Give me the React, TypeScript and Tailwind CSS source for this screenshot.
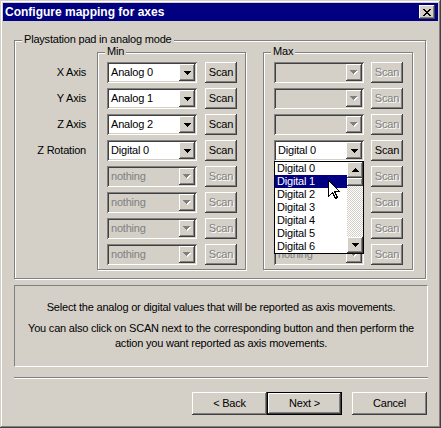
import clsx from 'clsx';

// classic 3D edges
const RAISED =
  'bg-[#d4d0c8] shadow-[inset_-1px_-1px_#404040,inset_1px_1px_#ffffff,inset_-2px_-2px_#808080,inset_2px_2px_#d4d0c8]';
const SUNKEN =
  'shadow-[inset_1px_1px_#808080,inset_-1px_-1px_#ffffff,inset_2px_2px_#404040,inset_-2px_-2px_#d4d0c8]';
const ETCHED = 'border border-[#808080] shadow-[inset_1px_1px_#ffffff,1px_1px_#ffffff]';

const MIN_ROWS = [
  { value: 'Analog 0' },
  { value: 'Analog 1' },
  { value: 'Analog 2' },
  { value: 'Digital 0' },
  { value: 'nothing', disabled: true },
  { value: 'nothing', disabled: true },
  { value: 'nothing', disabled: true },
  { value: 'nothing', disabled: true },
];

// rows 5-7 sit under the open list, so only the last one shows its text
const MAX_ROWS = [
  { value: '', disabled: true },
  { value: '', disabled: true },
  { value: '', disabled: true },
  { value: 'Digital 0', open: true },
  { value: '', disabled: true },
  { value: '', disabled: true },
  { value: '', disabled: true },
  { value: 'nothing', disabled: true },
];

const LIST = ['Digital 0', 'Digital 1', 'Digital 2', 'Digital 3', 'Digital 4', 'Digital 5', 'Digital 6'];

function Triangle({ up, color = '#000' }: { up?: boolean; color?: string }) {
  const rows = up ? [1, 3, 5, 7] : [7, 5, 3, 1];
  return (
    <svg width="7" height="4" viewBox="0 0 7 4" shapeRendering="crispEdges" className="block">
      {rows.map((w, i) => (
        <rect key={i} x={(7 - w) / 2} y={i} width={w} height={1} fill={color} />
      ))}
    </svg>
  );
}

function DisabledTriangle() {
  return (
    <span className="relative block h-[5px] w-[8px]">
      <span className="absolute left-[1px] top-[1px]">
        <Triangle color="#ffffff" />
      </span>
      <span className="absolute left-0 top-0">
        <Triangle color="#808080" />
      </span>
    </span>
  );
}

function Combo({ value, disabled }: { value: string; disabled?: boolean }) {
  return (
    <div
      className={clsx(
        'flex h-[21px] w-[90px] items-center p-[2px]',
        SUNKEN,
        disabled ? 'bg-[#d4d0c8]' : 'bg-white',
      )}
    >
      <span className={clsx('flex-1 truncate pl-[2px] leading-[17px]', disabled ? 'text-[#808080]' : 'text-black')}>
        {value}
      </span>
      <span className={clsx('flex h-[17px] w-[16px] items-center justify-center', RAISED)}>
        {disabled ? <DisabledTriangle /> : <Triangle />}
      </span>
    </div>
  );
}

function ScanButton({ disabled }: { disabled?: boolean }) {
  return (
    <button
      className={clsx(
        'flex h-[21px] w-[32px] items-center justify-center leading-none',
        RAISED,
        disabled ? 'text-[#808080] [text-shadow:1px_1px_0_#ffffff]' : 'text-black',
      )}
    >
      Scan
    </button>
  );
}

function GroupBox({ label, className, children }: { label: string; className?: string; children: React.ReactNode }) {
  return (
    <div className={clsx('relative', ETCHED, className)}>
      <span className="absolute -top-[8px] left-[7px] bg-[#d4d0c8] px-[2px] leading-[13px]">{label}</span>
      {children}
    </div>
  );
}

function DropList() {
  return (
    <div className="absolute left-0 top-[21px] z-10 flex h-[93px] w-[90px] border border-black bg-white">
      <div className="flex-1">
        {LIST.map((item) => (
          <div
            key={item}
            className={clsx(
              'h-[13px] pl-[2px] leading-[13px]',
              item === 'Digital 1' ? 'bg-[#000080] text-white' : 'text-black',
            )}
          >
            {item}
          </div>
        ))}
      </div>
      <div className="flex w-[16px] flex-col">
        <span className={clsx('flex h-[16px] items-center justify-center', RAISED)}>
          <Triangle up />
        </span>
        <span className={clsx('h-[8px]', RAISED)} />
        <span className="flex-1 [background-image:repeating-conic-gradient(#d4d0c8_0%_25%,#ffffff_0%_50%)] [background-size:2px_2px]" />
        <span className={clsx('flex h-[16px] items-center justify-center', RAISED)}>
          <Triangle />
        </span>
      </div>
      {/* mouse pointer */}
      <svg
        width="12"
        height="20"
        viewBox="0 0 12 20"
        shapeRendering="crispEdges"
        className="absolute left-[53px] top-[18px]"
      >
        <path d="M0.5 0.5 L0.5 16.5 L4.5 12.5 L7.5 18.5 L9.5 17.5 L6.5 11.5 L11.5 11.5 Z" fill="#fff" stroke="#000" />
      </svg>
    </div>
  );
}

function CloseGlyph() {
  const rows = ['XX....XX', '.XX..XX.', '..XXXX..', '...XX...', '..XXXX..', '.XX..XX.', 'XX....XX'];
  return (
    <svg width="8" height="7" viewBox="0 0 8 7" shapeRendering="crispEdges" className="block">
      {rows.flatMap((r, y) =>
        r.split('').map((c, x) => (c === 'X' ? <rect key={`${x}-${y}`} x={x} y={y} width={1} height={1} fill="#000" /> : null)),
      )}
    </svg>
  );
}

export default function App() {
  return (
    <div className="flex h-[428px] w-[441px] flex-col bg-[#d4d0c8] p-[3px] font-['Liberation_Sans',Arial,sans-serif] text-[11px] tracking-[-0.2px] text-black shadow-[inset_-1px_-1px_#404040,inset_1px_1px_#d4d0c8,inset_-2px_-2px_#808080,inset_2px_2px_#ffffff]">
      {/* Title bar */}
      <div className="flex h-[18px] items-center justify-between bg-[#000080] pl-[2px] pr-[3px]">
        <span className="text-[12px] font-bold tracking-normal text-white">Configure mapping for axes</span>
        <button className={clsx('flex h-[14px] w-[16px] items-center justify-center', RAISED)}>
          <CloseGlyph />
        </button>
      </div>

      <div className="flex flex-col px-[11px] pt-[19px]">
        <GroupBox label="Playstation pad in analog mode" className="h-[239px] w-[412px]">
          <div className="flex items-start pt-[11px]">
            <div className="flex w-[71px] flex-col gap-[5px] pt-[10px]">
              {['X Axis', 'Y Axis', 'Z Axis', 'Z Rotation'].map((l) => (
                <div key={l} className="flex h-[21px] items-center justify-end">
                  {l}
                </div>
              ))}
            </div>

            <GroupBox label="Min" className="ml-[11px] h-[218px] w-[149px]">
              <div className="flex flex-col gap-[5px] pl-[9px] pt-[9px]">
                {MIN_ROWS.map((r, i) => (
                  <div key={i} className="flex gap-[8px]">
                    <Combo value={r.value} disabled={r.disabled} />
                    <ScanButton disabled={r.disabled} />
                  </div>
                ))}
              </div>
            </GroupBox>

            <GroupBox label="Max" className="ml-[17px] h-[218px] w-[150px]">
              <div className="flex flex-col gap-[5px] pl-[10px] pt-[9px]">
                {MAX_ROWS.map((r, i) => (
                  <div key={i} className="flex gap-[7px]">
                    <div className="relative">
                      <Combo value={r.value} disabled={r.disabled} />
                      {r.open && <DropList />}
                    </div>
                    <ScanButton disabled={r.disabled} />
                  </div>
                ))}
              </div>
            </GroupBox>
          </div>
        </GroupBox>

        {/* Info */}
        <div className="mt-[6px] h-[82px] w-[414px] border border-b-white border-l-[#808080] border-r-white border-t-[#808080] pt-[14px] text-center leading-[15px]">
          <p>Select the analog or digital values that will be reported as axis movements.</p>
          <p className="mt-[6px] px-[6px]">
            You can also click on SCAN next to the corresponding button and then perform the action you want
            reported as axis movements.
          </p>
        </div>

        <div className="mt-[10px] h-[2px] w-[414px] border-b border-t border-b-white border-t-[#808080]" />

        <div className="mt-[13px] flex justify-end">
          <button className={clsx('h-[23px] w-[75px]', RAISED)}>&lt; Back</button>
          <button className="h-[23px] w-[75px] bg-[#d4d0c8] shadow-[inset_0_0_0_1px_#000000,inset_-2px_-2px_#404040,inset_2px_2px_#ffffff,inset_-3px_-3px_#808080]">
            Next &gt;
          </button>
          <button className={clsx('ml-[10px] h-[23px] w-[75px]', RAISED)}>Cancel</button>
        </div>
      </div>
    </div>
  );
}
